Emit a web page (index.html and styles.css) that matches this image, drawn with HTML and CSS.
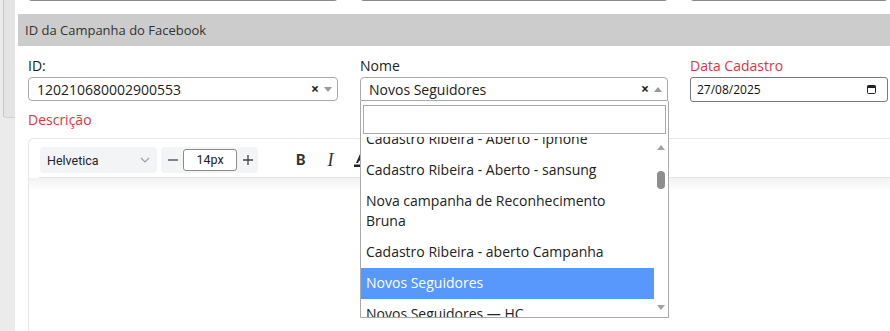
FILE: index.html
```html
<!DOCTYPE html>
<html lang="pt-BR">
<head>
    <meta charset="UTF-8">
    <meta name="viewport" content="width=device-width, initial-scale=1.0">
    <link rel="stylesheet" href="styles.css">
    <title>Campanha do Facebook</title>
</head>
<body>
    <div class="side">
        <div class="side-frame"></div>
    </div>
    <div class="main">
        <!-- bottom edges of the fields above, scrolled out of view -->
        <div class="prev-row">
            <div class="prev-input"></div>
            <div class="prev-input"></div>
            <div class="prev-input"></div>
        </div>

        <div class="panel-header">ID da Campanha do Facebook</div>

        <div class="panel-body">
            <div class="form-row">
                <div class="field">
                    <div class="field-label">ID:</div>
                    <div class="select-box">
                        <span class="select-value">120210680002900553</span>
                        <span class="select-clear">×</span>
                        <span class="select-arrow"></span>
                    </div>
                </div>
                <div class="field">
                    <div class="field-label">Nome</div>
                    <div class="select-box open">
                        <span class="select-value">Novos Seguidores</span>
                        <span class="select-clear">×</span>
                        <span class="select-arrow"></span>

                        <div class="dropdown">
                            <div class="dd-search-wrap">
                                <div class="dd-search"></div>
                            </div>
                            <div class="dd-results">
                                <div class="dd-list">
                                    <ul class="dd-items">
                                        <li class="dd-item">Cadastro Ribeira - Aberto - iphone</li>
                                        <li class="dd-item">Cadastro Ribeira - Aberto - sansung</li>
                                        <li class="dd-item">Nova campanha de Reconhecimento Bruna</li>
                                        <li class="dd-item">Cadastro Ribeira - aberto Campanha</li>
                                        <li class="dd-item active">Novos Seguidores</li>
                                        <li class="dd-item">Novos Seguidores — HC</li>
                                    </ul>
                                </div>
                                <div class="dd-scroll">
                                    <div class="dd-scroll-up"><span class="tri-up"></span></div>
                                    <div class="dd-thumb"></div>
                                    <div class="dd-scroll-down"><span class="tri-down"></span></div>
                                </div>
                            </div>
                        </div>
                    </div>
                </div>
                <div class="field">
                    <div class="field-label required">Data Cadastro</div>
                    <div class="date-box">
                        <span>27/08/2025</span>
                        <svg class="cal-icon" width="9" height="9" viewBox="0 0 9 9">
                            <rect x="0.5" y="0.5" width="8" height="8" rx="1" fill="none" stroke="#222" stroke-width="1"/>
                            <rect x="0.5" y="0.5" width="8" height="2.5" fill="#222"/>
                        </svg>
                    </div>
                </div>
            </div>

            <div class="field-label required desc-label">Descrição</div>

            <div class="editor">
                <div class="toolbar">
                    <div class="font-select">
                        <span>Helvetica</span>
                        <svg width="10" height="6" viewBox="0 0 10 6">
                            <path d="M1 1l4 4 4-4" fill="none" stroke="#9a9ea6" stroke-width="1.1"/>
                        </svg>
                    </div>
                    <div class="size-group">
                        <svg class="size-btn" width="10" height="10" viewBox="0 0 10 10">
                            <path d="M0 5h10" stroke="#444" stroke-width="1.3"/>
                        </svg>
                        <div class="size-input">14px</div>
                        <svg class="size-btn" width="10" height="10" viewBox="0 0 10 10">
                            <path d="M0 5h10M5 0v10" stroke="#444" stroke-width="1.3"/>
                        </svg>
                    </div>
                    <span class="tb-btn tb-bold">B</span>
                    <span class="tb-btn tb-italic">I</span>
                    <svg class="tb-color" width="14" height="14" viewBox="0 0 14 14">
                        <path d="M2 10L6 1h2l4 9h-2l-1-2.3H5L4 10z M5.6 6h2.8L7 2.8z" fill="#222" fill-rule="evenodd"/>
                        <rect x="0" y="11.5" width="14" height="2.5" fill="#222"/>
                    </svg>
                </div>
                <div class="toolbar-shadow"></div>
            </div>
        </div>
    </div>
</body>
</html>
```

FILE: styles.css
```css
body {
    margin: 0;
    font-family: "Open Sans", "Noto Sans", sans-serif;
    color: #222;
    background-color: #fff;
    display: flex;
    height: 331px;
    overflow: hidden;
}

.side {
    width: 15px;
    flex-shrink: 0;
    background-color: #ebebeb;
}

.side-frame {
    margin-left: 3px;
    height: 117px;
    background-color: #e4e4e4;
    border-left: 1px solid #c6c6c6;
    border-bottom: 1px solid #d2d2d2;
    border-bottom-left-radius: 3px;
}

.main {
    flex: 1;
    min-width: 0;
    margin-left: 3px;
}

.prev-row,
.form-row {
    display: grid;
    grid-template-columns: 310px 308px 198px;
    column-gap: 22px;
}

.prev-row {
    height: 14px;
    padding-left: 10px;
}

.prev-input {
    height: 3px;
    margin-top: -3px;
    border: 1px solid #8a8a8a;
    border-top: none;
    border-radius: 0 0 4px 4px;
}

.panel-header {
    height: 32px;
    line-height: 32px;
    padding-left: 7px;
    background-color: #ccc;
    font-size: 13px;
    color: #333;
}

.panel-body {
    padding: 10px 0 0 10px;
}

.field-label {
    font-size: 14px;
    line-height: 20px;
    margin-bottom: 1px;
}

.field-label.required {
    color: #dc3545;
}

.desc-label {
    margin-top: 8px;
    margin-bottom: 0;
}

/* select2-like boxes */
.select-box {
    position: relative;
    display: flex;
    align-items: center;
    height: 24px;
    box-sizing: border-box;
    padding: 0 5px 0 8px;
    border: 1px solid #aaa;
    border-radius: 4px;
    font-size: 14px;
}

.select-box.open {
    border-radius: 4px 4px 0 0;
}

.select-value {
    flex: 1;
    white-space: nowrap;
}

.select-clear {
    font-weight: bold;
    font-size: 14px;
    line-height: 1;
    color: #222;
    margin-right: 5px;
}

.select-arrow {
    width: 0;
    height: 0;
    border-style: solid;
    border-width: 5px 4px 0 4px;
    border-color: #999 transparent transparent transparent;
}

.select-box.open .select-arrow {
    border-width: 0 4px 5px 4px;
    border-color: transparent transparent #999 transparent;
}

.date-box {
    display: flex;
    align-items: center;
    justify-content: space-between;
    height: 25px;
    box-sizing: border-box;
    padding: 0 11px 0 6px;
    border: 1px solid #7a7a7a;
    border-radius: 3px;
    font-size: 12px;
    color: #111;
}

/* open dropdown */
.dropdown {
    position: absolute;
    top: calc(100% + 1px);
    left: -1px;
    right: -2px;
    height: 217px;
    box-sizing: border-box;
    background-color: #fff;
    border: 1px solid #aaa;
    border-top: none;
    z-index: 10;
}

.dd-search-wrap {
    padding: 4px 2px 3px 2px;
}

.dd-search {
    height: 29px;
    box-sizing: border-box;
    border: 1px solid #aaa;
}

.dd-results {
    display: flex;
    height: 180px;
}

.dd-list {
    flex: 1;
    overflow: hidden;
}

.dd-items {
    list-style: none;
    margin: -13px 0 0 0;
    padding: 0;
}

.dd-item {
    padding: 5px 6px 6px 5px;
    font-size: 14px;
    line-height: 20px;
    color: #222;
}

.dd-item.active {
    background-color: #5897fb;
    color: #fff;
}

.dd-scroll {
    width: 14px;
    display: flex;
    flex-direction: column;
    align-items: center;
}

.dd-scroll-up,
.dd-scroll-down {
    display: flex;
    align-items: center;
    justify-content: center;
    width: 100%;
}

.dd-scroll-up {
    height: 20px;
}

.dd-scroll-down {
    height: 20px;
    margin-top: auto;
}

.tri-up,
.tri-down {
    width: 0;
    height: 0;
    border-style: solid;
}

.tri-up {
    border-width: 0 4px 5px 4px;
    border-color: transparent transparent #a3a3a3 transparent;
}

.tri-down {
    border-width: 5px 4px 0 4px;
    border-color: #a3a3a3 transparent transparent transparent;
}

.dd-thumb {
    width: 8px;
    height: 18px;
    margin-top: 14px;
    border-radius: 4px;
    background-color: #8e8e8e;
}

/* rich text editor */
.editor {
    margin-top: 8px;
    width: 900px;
    height: 220px;
    border: 1px solid #e6e6e6;
    border-right: none;
    border-radius: 6px 0 0 0;
}

.toolbar {
    display: flex;
    align-items: center;
    margin-left: 10px;
    padding: 8px 0 4px 1px;
    border-bottom: 1px solid #e3e3e3;
}

.toolbar-shadow {
    height: 14px;
    background: linear-gradient(rgba(0, 0, 0, 0.05), rgba(0, 0, 0, 0));
}

.font-select {
    display: flex;
    align-items: center;
    justify-content: space-between;
    width: 117px;
    height: 26px;
    box-sizing: border-box;
    padding: 0 7px 0 7px;
    background-color: #f3f4f6;
    border-radius: 4px;
    font-family: Roboto, "Noto Sans", sans-serif;
    font-size: 12.5px;
    color: #1f2430;
}

.size-group {
    display: flex;
    align-items: center;
    width: 97px;
    height: 26px;
    box-sizing: border-box;
    margin-left: 4px;
    padding-left: 7px;
    background-color: #f3f4f6;
    border-radius: 4px;
}

.size-input {
    width: 54px;
    height: 22px;
    box-sizing: border-box;
    margin: 0 6px 0 5px;
    border: 1px solid #8c8c8c;
    border-radius: 3px;
    background-color: #fff;
    text-align: center;
    font-family: Roboto, "Noto Sans", sans-serif;
    font-size: 12.5px;
    line-height: 20px;
    color: #222;
}

.tb-btn {
    color: #333;
    line-height: 1;
}

.tb-bold {
    margin-left: 38px;
    font-family: Roboto, "Noto Sans", sans-serif;
    font-weight: bold;
    font-size: 15px;
}

.tb-italic {
    margin-left: 22px;
    font-family: "Liberation Serif", serif;
    font-style: italic;
    font-size: 18px;
}

.tb-color {
    margin-left: 20px;
}
```
